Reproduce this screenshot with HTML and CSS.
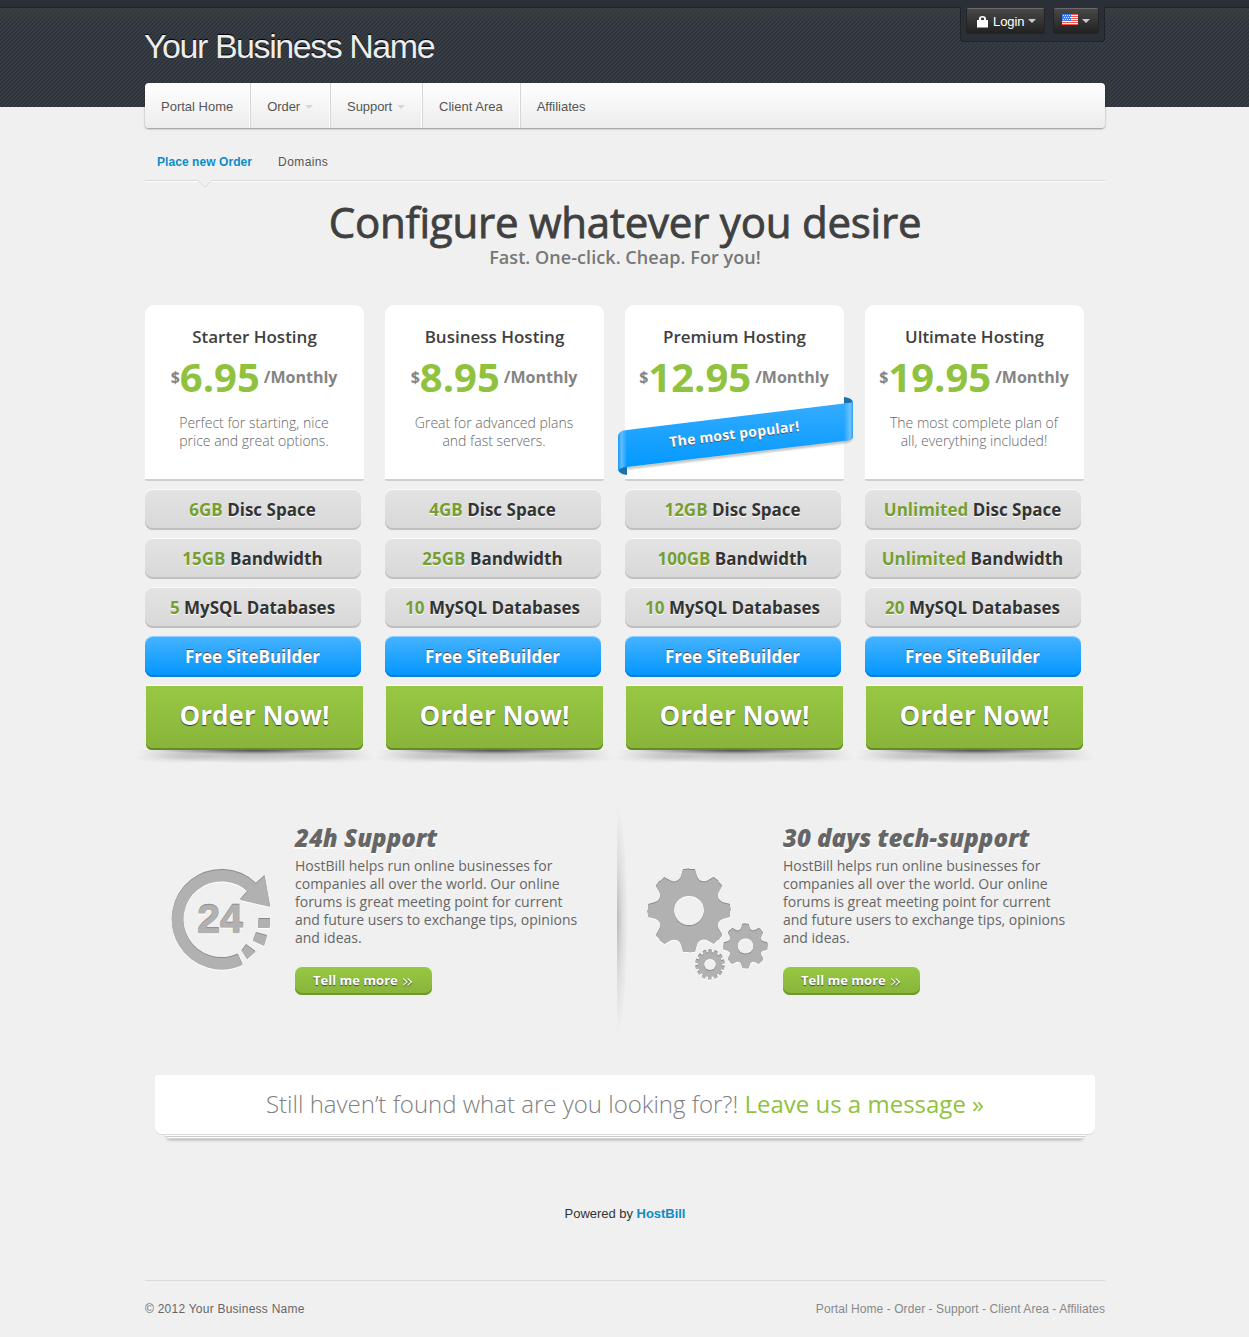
FILE: index.html
```html
<!DOCTYPE html>
<html lang="en">
<head>
<meta charset="utf-8">
<title>Your Business Name</title>
<link rel="stylesheet" href="styles.css">
</head>
<body>
<header class="header">
  <div class="header-inner">
    <div class="brand">Your Business Name</div>
    <div class="tray">
      <a class="tray-btn login">
        <svg width="11" height="13" viewBox="0 0 11 13"><path d="M0 5h2V3.500Q2 1 5.500 1Q9 1 9 3.500V5h2v7.500H0zM4 5h3V3.500Q7 2.500 5.500 2.500Q4 2.500 4 3.500z" fill="#fff" fill-rule="evenodd"/></svg>
        <span class="login-label">Login</span><i class="caret"></i>
      </a>
      <a class="tray-btn lang">
        <svg class="flag" width="16" height="11" viewBox="0 0 16 11"><rect width="16" height="11" fill="#fff"/><path d="M0 .5h16M0 2.500h16M0 4.500h16M0 6.500h16M0 8.500h16M0 10.500h16" stroke="#f0544a"/><rect width="9" height="7" fill="#3d7bea"/><path d="M1 1.500h8M2 3.500h7M1 5.500h8" stroke="#dce8ff" stroke-dasharray="1 1"/></svg>
        <i class="caret"></i>
      </a>
    </div>
  </div>
</header>
<div class="page">
  <nav class="nav">
    <a>Portal Home</a><a class="drop">Order<i class="caret pale"></i></a><a class="drop">Support<i class="caret pale"></i></a><a>Client Area</a><a>Affiliates</a>
  </nav>
  <nav class="subnav">
    <a class="current">Place new Order</a><a class="other">Domains</a>
    <svg class="notch" width="16" height="8" viewBox="0 0 16 8"><path d="M0 0H16L8 7.500z" fill="#f0f0f0"/><path d="M1 0.500L8 7L15 .5" fill="none" stroke="#d8d8d8"/></svg>
  </nav>
  <h1 class="title"><span>Configure whatever you desire</span></h1>
  <p class="tagline"><span>Fast. One-click. Cheap. For you!</span></p>

  <section class="plans">
    <article class="plan">
      <div class="card"><h2>Starter Hosting</h2><div class="price"><small>$</small><b>6.95</b><em>/Monthly</em></div><p>Perfect for starting, nice<br>price and great options.</p></div>
      <div class="pill"><span><b>6GB</b> Disc Space</span></div><div class="pill"><span><b>15GB</b> Bandwidth</span></div><div class="pill"><span><b>5</b> MySQL Databases</span></div><div class="pill blue"><span>Free SiteBuilder</span></div>
      <a class="order">Order Now!</a><div class="shade"></div>
    </article>
    <article class="plan">
      <div class="card"><h2>Business Hosting</h2><div class="price"><small>$</small><b>8.95</b><em>/Monthly</em></div><p>Great for advanced plans<br>and fast servers.</p></div>
      <div class="pill"><span><b>4GB</b> Disc Space</span></div><div class="pill"><span><b>25GB</b> Bandwidth</span></div><div class="pill"><span><b>10</b> MySQL Databases</span></div><div class="pill blue"><span>Free SiteBuilder</span></div>
      <a class="order">Order Now!</a><div class="shade"></div>
    </article>
    <article class="plan">
      <div class="card"><h2>Premium Hosting</h2><div class="price"><small>$</small><b>12.95</b><em>/Monthly</em></div>
        <div class="ribbon">
          <svg width="238" height="82" viewBox="0 0 238 82">
            <defs>
              <linearGradient id="rb" x1="0" y1="0" x2="0" y2="1"><stop offset="0" stop-color="#35acff"/><stop offset="1" stop-color="#0098ff"/></linearGradient>
              <linearGradient id="re" x1="0" y1="0" x2="1" y2="0"><stop offset="0" stop-color="#1c96f5"/><stop offset=".4" stop-color="#62bdff"/><stop offset="1" stop-color="#62bdff" stop-opacity="0"/></linearGradient>
              <linearGradient id="rr" x1="1" y1="0" x2="0" y2="0"><stop offset="0" stop-color="#2a9ef5"/><stop offset=".3" stop-color="#6cc3ff"/><stop offset="1" stop-color="#6cc3ff" stop-opacity="0"/></linearGradient>
              <filter id="soft" x="-10%" y="-20%" width="120%" height="150%"><feGaussianBlur stdDeviation="1"/></filter>
            </defs>
            <path d="M10 72L226 46Q234 45 235 41" fill="none" stroke="#000" stroke-opacity=".35" stroke-width="2" filter="url(#soft)"/>
            <path d="M227 1Q236 2 236 7L227 8zM10 70V79Q1 78 1 72z" fill="#1b70ad"/>
            <path d="M1 41Q1 35 10 34L227 7.500Q236 7 236 5.500V41Q235 44.500 227 45L10 71Q3 71 1 75z" fill="url(#rb)"/>
            <path d="M1 41Q1 35 10 34V71Q3 71 1 75z" fill="url(#re)"/>
            <path d="M227 7.500Q236 7 236 5.500V41Q235 44.500 227 45z" fill="url(#rr)"/>
          </svg>
          <span class="ribbon-text">The most popular!</span>
        </div>
      </div>
      <div class="pill"><span><b>12GB</b> Disc Space</span></div><div class="pill"><span><b>100GB</b> Bandwidth</span></div><div class="pill"><span><b>10</b> MySQL Databases</span></div><div class="pill blue"><span>Free SiteBuilder</span></div>
      <a class="order">Order Now!</a><div class="shade"></div>
    </article>
    <article class="plan">
      <div class="card"><h2>Ultimate Hosting</h2><div class="price"><small>$</small><b>19.95</b><em>/Monthly</em></div><p>The most complete plan of<br>all, everything included!</p></div>
      <div class="pill"><span><b>Unlimited</b> Disc Space</span></div><div class="pill"><span><b>Unlimited</b> Bandwidth</span></div><div class="pill"><span><b>20</b> MySQL Databases</span></div><div class="pill blue"><span>Free SiteBuilder</span></div>
      <a class="order">Order Now!</a><div class="shade"></div>
    </article>
  </section>

  <section class="features">
    <article class="feature">
      <svg class="icon-24" width="104" height="104" viewBox="0 0 104 104">
        <defs><g id="clock">
          <path d="M72.100 90.700A44 44 0 1 1 84.500 19.500" fill="none" stroke="currentColor" stroke-width="11.500"/>
          <path fill="currentColor" d="M87 15.500L96.500 7L102 38L72 31L79 23zM90.500 50h11.500l-.5 9H90zM88 64l11 3L96 77l-11-5zM78 76l9.500 7L79 90.500l-5.500-8.500z"/>
          <text x="52" y="64" text-anchor="middle" class="icon-num">24</text>
        </g></defs>
        <use href="#clock" y="2" color="#fff"/><use href="#clock" color="#8b8b8b"/><use href="#clock" y="1" color="#b1b1b1"/>
      </svg>
      <div class="copy"><h3>24h Support</h3>
        <p>HostBill helps run online businesses for<br>companies all over the world. Our online<br>forums is great meeting point for current<br>and future users to exchange tips, opinions<br>and ideas.</p>
        <a class="more">Tell me more <span>»</span></a></div>
    </article>
    <article class="feature second">
      <svg class="icon-gears" width="124" height="116" viewBox="0 0 124 116">
        <defs>
          <path id="w8" d="M0 0L-6 -41.500H6L8 -34.500C9.500 -29.500 14.300 -28 18.700 -30L24.700 -33.500L30 -30z"/>
          <mask id="hole8" maskUnits="userSpaceOnUse" x="-45" y="-45" width="90" height="90"><rect x="-45" y="-45" width="90" height="90" fill="#fff"/><circle r="15.300"/></mask>
          <g id="gear8" mask="url(#hole8)" fill="currentColor"><circle r="28"/><use href="#w8"/><use href="#w8" transform="rotate(45)"/><use href="#w8" transform="rotate(90)"/><use href="#w8" transform="rotate(135)"/><use href="#w8" transform="rotate(180)"/><use href="#w8" transform="rotate(225)"/><use href="#w8" transform="rotate(270)"/><use href="#w8" transform="rotate(315)"/></g>
          <mask id="hole14" maskUnits="userSpaceOnUse" x="-17" y="-17" width="34" height="34"><rect x="-17" y="-17" width="34" height="34" fill="#fff"/><circle r="6"/></mask>
          <g id="gear14" mask="url(#hole14)" fill="none" stroke="currentColor"><circle r="8.500" stroke-width="7"/><circle r="13" stroke-width="3.400" stroke-dasharray="3.200 2.634" transform="rotate(-97)"/></g>
          <g id="gears"><use href="#gear8" transform="translate(43 43) scale(.985)"/><use href="#gear8" transform="translate(99.500 78.500) scale(.525)"/><use href="#gear14" transform="translate(64 97)"/></g>
        </defs>
        <use href="#gears" y="2" color="#fff"/><use href="#gears" color="#8b8b8b"/><use href="#gears" y="1" color="#b1b1b1"/>
      </svg>
      <div class="copy"><h3 class="wide">30 days tech-support</h3>
        <p>HostBill helps run online businesses for<br>companies all over the world. Our online<br>forums is great meeting point for current<br>and future users to exchange tips, opinions<br>and ideas.</p>
        <a class="more">Tell me more <span>»</span></a></div>
    </article>
  </section>

  <section class="contact"><div class="contact-box"><span>Still haven’t found what are you looking for?! <a>Leave us a message »</a></span></div><div class="sheet one"></div><div class="sheet two"></div></section>
  <p class="powered">Powered by <b>HostBill</b></p>
  <footer class="footer"><span class="copyright">© 2012 Your Business Name</span><span class="links">Portal Home - Order - Support - Client Area - Affiliates</span></footer>
</div>
</body>
</html>
```
FILE: styles.css
```css
* { box-sizing: border-box; }
body { margin: 0; background: #f0f0f0; color: #333; font: 13px/18px "Liberation Sans", Arial, sans-serif; }
h1, h2, h3, p { margin: 0; }
svg { display: block; }

.header { height: 107px; border-top: 7px solid #2b3038; background:
  linear-gradient(#1f2326, #1f2326) 0 0 / 100% 1px no-repeat,
  linear-gradient(rgba(60,66,62,.6), rgba(50,56,66,0) 18px),
  linear-gradient(135deg, #2d3339 25%, #373e47 25% 50%, #2d3339 50% 75%, #373e47 75%) 0 0 / 4px 4px; }
.header-inner { display: flex; justify-content: space-between; align-items: flex-start; width: 960px; margin-left: 145px; }
.brand { padding-top: 19px; margin-left: -1px; color: #ededed; font-size: 34px; line-height: 40px; letter-spacing: -1.45px; white-space: nowrap; text-shadow: 0 -1px 1px #000; }
.tray { display: flex; gap: 8px; width: 145px; height: 35px; padding: 0 5px; background: #2b3038; border: 1px solid #1f2326; border-top: 0; border-radius: 0 0 4px 4px; }
.tray-btn { display: flex; align-items: center; height: 26px; margin-top: 1px; color: #fff; background: linear-gradient(#484848, #212121); border: 1px solid #242424; border-top-color: #6a6a6a; border-radius: 3px; font-size: 12px; }
.login { width: 79px; padding-left: 10px; }
.login-label { margin: 2px 4px 0 5px; font-size: 13px; letter-spacing: -.1px; }
.lang { width: 46px; padding-left: 8px; gap: 4px; }
.flag { margin-top: -3px; }
.caret { width: 0; height: 0; border: 4px solid transparent; border-top-color: #ccc; border-bottom: 0; }
.caret.pale { border-top-color: #d8d8d8; margin-left: 5px; }

.page { width: 960px; margin: -24px 0 0 145px; }
.nav { position: relative; display: flex; height: 45px; background: linear-gradient(#fff, #ececec); border-radius: 4px; box-shadow: 0 1px 2px rgba(0,0,0,.4); }
.nav a { display: flex; align-items: center; padding: 2px 17px 0 16px; border-right: 1px solid #d6d6d6; box-shadow: inset -1px 0 #fff; color: #555; font-size: 13px; }
.nav .drop { padding-right: 17px; letter-spacing: -.08px; }
.nav a:last-child { border: 0; box-shadow: none; }
.subnav { position: relative; display: flex; gap: 26px; height: 53px; padding: 25px 12px 0; border-bottom: 1px solid #d8d8d8; box-shadow: 0 1px #fff; color: #555; font-size: 12px; }
.current { color: #0d8cc9; font-weight: bold; letter-spacing: .07px; }
.other { letter-spacing: .4px; }
.notch { position: absolute; left: 52px; top: 52px; }

.title { margin-top: 13px; text-align: center; color: #404040; font: 400 42px/55px "Open Sans", sans-serif; letter-spacing: -.22px; -webkit-text-stroke: .8px #404040; white-space: nowrap; }
.tagline { text-align: center; color: #777; font: 600 18px/16px "Open Sans", sans-serif; letter-spacing: .06px; white-space: nowrap; }

.plans { display: flex; gap: 21px; margin-top: 40px; font-family: "Open Sans", sans-serif; }
.plan { width: 219px; display: flex; flex-direction: column; }
.card { position: relative; height: 176px; margin-bottom: 9px; padding-top: 20px; text-align: center; background: #fff; border-bottom: 2px solid #cfcfcf; border-radius: 9px 9px 2px 2px; }
.card h2 { color: #404040; font-size: 17px; font-weight: 600; line-height: 24px; }
.price { display: flex; justify-content: center; align-items: center; height: 56px; padding-right: 1px; color: #848484; }
.price small, .price em { font-size: 16px; font-weight: 700; font-style: normal; }
.price b { color: #8fc23e; font-size: 40px; }
.price em { margin-left: 4px; }
.card p { margin-top: 9px; padding-right: 1px; color: #666; font-size: 14px; font-weight: 300; }
.pill { width: 216px; height: 40px; margin-bottom: 9px; padding-right: 1px; text-align: center; color: #333; font-size: 17px; font-weight: 700; line-height: 39px; background: linear-gradient(#e3e3e3, #d8d8d8); border-radius: 8px; box-shadow: inset 0 -2px #bfbfbf, 0 -1px #fafafa; text-shadow: 0 1px #fff; white-space: nowrap; }
.pill b { color: #769e31; font-weight: 700; }
.pill.blue { color: #fff; background: linear-gradient(#45b2ff, #0096ff); box-shadow: inset 0 -2px #0380d8, 0 -1px #8dd0ff; text-shadow: 0 -1px #525252; }
.order { width: 217px; height: 64px; margin-left: 1px; text-align: center; color: #fff; font-size: 26px; font-weight: 700; line-height: 59px; background: linear-gradient(#97c843, #88b43a); border-radius: 0 0 6px 6px; box-shadow: inset 0 -2px #648b25, 0 -1px #fff; text-shadow: 0 1px 1px #333; }
.shade { height: 15px; margin: 0 -9px; background:
  radial-gradient(ellipse 42% 28% at 50% 0, rgba(0,0,0,.6), rgba(0,0,0,.2) 60%, transparent),
  radial-gradient(ellipse 50% 80% at 50% 10%, rgba(0,0,0,.26), rgba(0,0,0,.14) 60%, transparent),
  radial-gradient(ellipse 20% 40% at 18% 50%, rgba(0,0,0,.1), transparent),
  radial-gradient(ellipse 20% 40% at 82% 50%, rgba(0,0,0,.1), transparent); }
.ribbon { position: absolute; left: -8px; top: 91px; }
.ribbon-text { position: absolute; left: 52px; top: 29px; color: #fff; font-size: 14px; font-weight: 700; letter-spacing: .22px; white-space: nowrap; transform: rotate(-7deg); text-shadow: 0 1px #555; }

.features { display: flex; margin-top: 40px; height: 230px; }
.feature { display: flex; position: relative; width: 488px; font-family: "Open Sans", sans-serif; }
.feature.second { width: 472px; }
.second::before { content: ""; position: absolute; left: -16px; top: 0; width: 11px; height: 230px; background: radial-gradient(ellipse 100% 50% at 0 50%, rgba(0,0,0,.22), rgba(0,0,0,.08) 50%, transparent); }
.icon-24 { flex: none; margin: 63px 23px 0 23px; }
.icon-gears { flex: none; margin: 62px 13px 0 13px; }
.icon-num { font: bold 41px "Liberation Sans", Arial, sans-serif; fill: currentColor; stroke: currentColor; stroke-width: .7px; }
.copy { padding-top: 19px; white-space: nowrap; }
.copy h3 { color: #666; font-size: 24px; font-weight: 800; font-style: italic; line-height: 28px; text-shadow: 0 2px #fff; }
.copy p { margin-top: 5px; color: #666; font-size: 14px; }
.more { display: flex; align-items: center; gap: 4px; width: 137px; height: 28px; margin-top: 20px; padding: 0 0 2px 18px; color: #fff; font-size: 13px; font-weight: 700; line-height: 26px; background: linear-gradient(#97c843, #88b43a); border-radius: 7px; box-shadow: inset 0 -2px #6d9829; text-shadow: 0 1px 1px #444; }
.more span { font-weight: 300; font-size: 18px; line-height: 16px; transform: scaleX(1.4); transform-origin: 0 50%; }

.contact { margin: 40px 10px 0; height: 66px; }
.contact-box { height: 59px; text-align: center; color: #808080; font: 300 24px/57px "Open Sans", sans-serif; background: #fff; border-radius: 3px 3px 7px 7px; box-shadow: 0 1px #dcdcdc; white-space: nowrap; }
.contact-box a { color: #8fc23e; font-weight: 400; }
.sheet { background: #fff; border-bottom: 1px solid #d4d4d4; border-radius: 0 0 4px 4px; }
.sheet.one { margin: 0 8px; height: 3px; border-top: 1px solid #dcdcdc; }
.sheet.two { margin: 0 12px; height: 2px; box-shadow: 0 1px 3px rgba(0,0,0,.35); }
.powered { margin-top: 64px; text-align: center; letter-spacing: -.03px; }
.powered b { color: #0d8cc9; }
.footer { display: flex; justify-content: space-between; margin-top: 57px; height: 57px; padding-top: 19px; border-top: 1px solid #dadada; color: #666; font-size: 12px; }
.copyright { letter-spacing: .24px; }
.links { color: #888; letter-spacing: .07px; }
```
